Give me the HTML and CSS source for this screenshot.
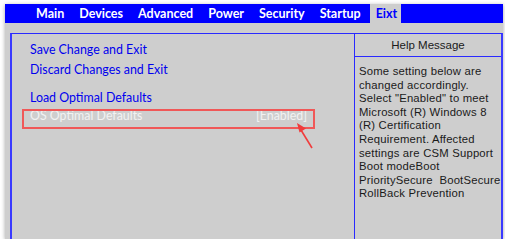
FILE: index.html
```html
<!DOCTYPE html>
<html lang="en">
<head>
    <meta charset="UTF-8">
    <meta name="viewport" content="width=device-width, initial-scale=1.0">
    <title>BIOS Setup - Exit</title>
    <link rel="stylesheet" href="styles.css">
</head>
<body>
    <div class="screen">
        <!-- top menu tabs -->
        <div class="tabs">
            <span class="tab">Main</span>
            <span class="tab">Devices</span>
            <span class="tab">Advanced</span>
            <span class="tab">Power</span>
            <span class="tab">Security</span>
            <span class="tab">Startup</span>
            <span class="tab active">Eixt</span>
        </div>

        <div class="frame">
            <div class="menu">
                <div class="item">Save Change and Exit</div>
                <div class="item">Discard Changes and Exit</div>
                <div class="item load">Load Optimal Defaults</div>
                <div class="item option">
                    <span>OS Optimal Defaults</span>
                    <span>[Enabled]</span>
                </div>

                <!-- annotation -->
                <div class="mark"></div>
                <svg class="arrow" width="24" height="30" viewBox="0 0 24 30">
                    <line x1="19" y1="29" x2="8" y2="11" stroke="#f03c3c" stroke-width="1.6"/>
                    <polygon points="4,4 13,9.5 6.5,13.5" fill="#f03c3c"/>
                </svg>
            </div>

            <div class="help">
                <div class="help-title">Help Message</div>
                <div class="help-text">
                    Some setting below are<br>
                    changed accordingly.<br>
                    Select "Enabled" to meet<br>
                    Microsoft (R) Windows 8<br>
                    (R) Certification<br>
                    Requirement. Affected<br>
                    settings are CSM Support<br>
                    Boot modeBoot<br>
                    PrioritySecure&nbsp; BootSecure<br>
                    RollBack Prevention
                </div>
            </div>
        </div>
    </div>
</body>
</html>
```

FILE: styles.css
```css
body {
    margin: 0;
    background-color: #ffffff;
}

.screen {
    width: 498px;
    height: 235px;
    margin: 4px 0 0 5px;
    background-color: #cecece;
    box-shadow: 0 1px 4px rgba(0, 0, 0, 0.35);
    overflow: hidden;
}

.tabs {
    display: flex;
    height: 19px;
    padding-left: 25px;
    background-color: #0000ff;
    font-family: Lato, "Open Sans", sans-serif;
    font-weight: 700;
    font-size: 12.5px;
    line-height: 19px;
}

.tab {
    padding: 0 6px 0 6px;
    margin-right: 3px;
    color: #ffffff;
}

.tab.active {
    padding-right: 4px;
    background-color: #cecece;
    color: #0000ff;
}

.frame {
    display: grid;
    grid-template-columns: 342px 1fr;
    height: 205px;
    margin: 10px 0 0 5px;
    border-top: 1px solid #2a2aff;
    border-left: 2px solid #3a3aff;
    border-right: 2px solid #3a3aff;
}

.menu {
    position: relative;
    padding: 6.5px 0 0 18px;
    font-family: Lato, "Open Sans", sans-serif;
    font-size: 12.4px;
    color: #0000ee;
}

.item {
    height: 17px;
    line-height: 17px;
    margin-bottom: 3px;
}

.item.load {
    margin-top: 11px;
    margin-bottom: 0;
}

.item.option {
    display: flex;
    justify-content: space-between;
    width: 277px;
    line-height: 19px;
    color: #f2f2f2;
}

.mark {
    position: absolute;
    left: 10px;
    top: 75px;
    width: 289px;
    height: 16px;
    border: 2px solid #f05858;
}

.arrow {
    position: absolute;
    left: 281px;
    top: 85px;
}

.help {
    border-left: 1px solid #2a2aff;
    font-family: "Liberation Sans", Arial, sans-serif;
    color: #1a1a1a;
}

.help-title {
    height: 22px;
    line-height: 22px;
    text-align: center;
    font-size: 11.5px;
    border-bottom: 1px solid #2a2aff;
}

.help-text {
    padding: 8px 0 0 4px;
    font-size: 11.3px;
    line-height: 13.6px;
    letter-spacing: 0.2px;
    white-space: nowrap;
}
```
